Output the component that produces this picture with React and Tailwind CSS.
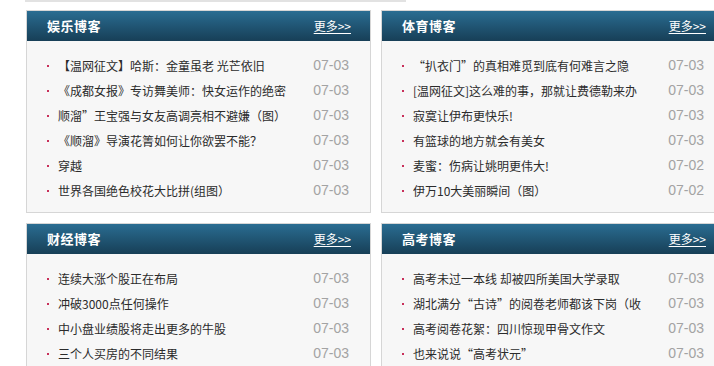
import React from "react";

const panels = [
  [
    {
      title: "娱乐博客",
      items: [
        ["【温网征文】哈斯：金童虽老 光芒依旧", "07-03"],
        ["《成都女报》专访舞美师：快女运作的绝密", "07-03"],
        ["顺溜”王宝强与女友高调亮相不避嫌（图）", "07-03"],
        ["《顺溜》导演花箐如何让你欲罢不能？", "07-03"],
        ["穿越", "07-03"],
        ["世界各国绝色校花大比拼(组图）", "07-03"],
      ],
    },
    {
      title: "体育博客",
      items: [
        ["“扒衣门”的真相难觅到底有何难言之隐", "07-03"],
        ["[温网征文]这么难的事，那就让费德勒来办", "07-03"],
        ["寂寞让伊布更快乐!", "07-03"],
        ["有篮球的地方就会有美女", "07-03"],
        ["麦蜜：伤病让姚明更伟大!", "07-02"],
        ["伊万10大美丽瞬间（图）", "07-02"],
      ],
    },
  ],
  [
    {
      title: "财经博客",
      items: [
        ["连续大涨个股正在布局", "07-03"],
        ["冲破3000点任何操作", "07-03"],
        ["中小盘业绩股将走出更多的牛股", "07-03"],
        ["三个人买房的不同结果", "07-03"],
      ],
    },
    {
      title: "高考博客",
      items: [
        ["高考未过一本线 却被四所美国大学录取", "07-03"],
        ["湖北满分“古诗”的阅卷老师都该下岗（收", "07-03"],
        ["高考阅卷花絮：四川惊现甲骨文作文", "07-03"],
        ["也来说说“高考状元”", "07-03"],
      ],
    },
  ],
];

function Panel({ title, items }) {
  return (
    <div className="w-[345px] shrink-0 border border-[#d6d6d6] bg-[#f7f7f7]">
      <div className="h-[30px] flex items-center justify-between pl-[20px] pr-[19px] bg-gradient-to-b from-[#2a6d92] to-[#173f57]">
        <span className="text-white font-bold text-[13px] tracking-[0.5px]">{title}</span>
        <span className="text-white text-[12px] underline underline-offset-2 decoration-1">更多&gt;&gt;</span>
      </div>
      <ul className="pt-[12px] pb-[9px]">
        {items.map(([t, d], i) => (
          <li key={i} className="h-[25px] flex items-center pl-[20px] pr-[21px]">
            <span className="w-[2px] h-[2px] bg-[#c8305a] shrink-0" />
            <span className="ml-[9px] flex-1 text-[12px] text-[#2b2b2b] whitespace-nowrap overflow-hidden">{t}</span>
            <span className="ml-2 text-[14px] text-[#a3a3a3] font-['Liberation_Sans',Arial,sans-serif]">{d}</span>
          </li>
        ))}
      </ul>
    </div>
  );
}

export default function App() {
  return (
    <div
      className="w-[714px] h-[366px] overflow-hidden bg-white"
      style={{ fontFamily: '"Noto Sans CJK SC", "Liberation Sans", sans-serif' }}
    >
      <div className="ml-[25px] w-[381px] h-[2px] bg-[#e2e2e2]" />
      <div className="mt-[8px] flex gap-[10px] ml-[26px]">
        <Panel {...panels[0][0]} />
        <Panel {...panels[0][1]} />
      </div>
      <div className="mt-[10px] flex gap-[10px] ml-[26px]">
        <Panel {...panels[1][0]} />
        <Panel {...panels[1][1]} />
      </div>
    </div>
  );
}
